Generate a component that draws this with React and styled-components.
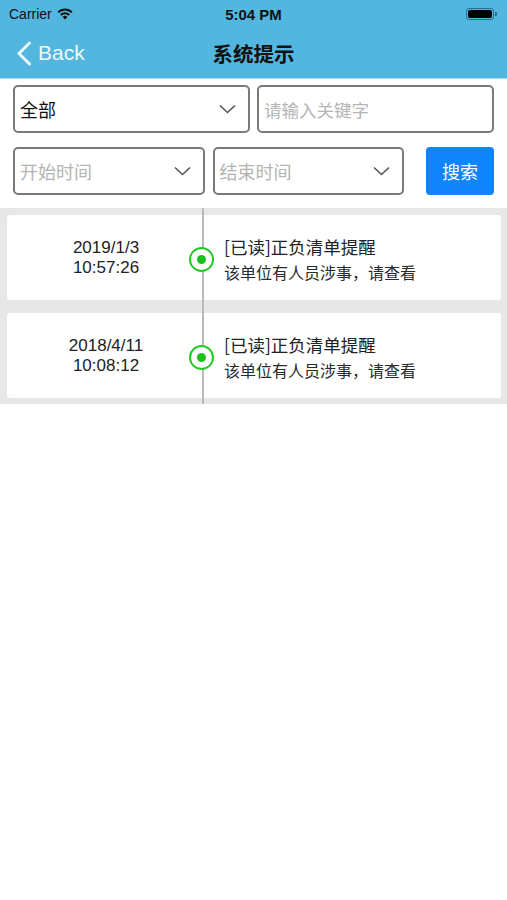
import React from "react";
import styled, { createGlobalStyle } from "styled-components";

const Global = createGlobalStyle`
  html, body { margin: 0; padding: 0; background: #ffffff; }
  body { font-family: "Liberation Sans", "Noto Sans CJK SC", sans-serif; }
  * { box-sizing: border-box; }
`;

const Page = styled.div`
  width: 507px;
  min-height: 900px;
  background: #ffffff;
`;

const Header = styled.header`
  background: #52b6df;
  border-bottom: 1px solid #a8dbef;
`;

const StatusBar = styled.div`
  height: 28px;
  display: grid;
  grid-template-columns: 1fr auto 1fr;
  align-items: center;
  padding: 0 9px;
  color: #111;
  font-size: 14px;
`;

const Carrier = styled.div`
  display: flex;
  align-items: center;
  gap: 5px;
`;

const Clock = styled.div`
  font-weight: bold;
  font-size: 15px;
`;

const BatteryWrap = styled.div`
  justify-self: end;
  display: flex;
  align-items: center;
  margin-right: 1px;
`;

const BatteryBody = styled.div`
  width: 28px;
  height: 12px;
  border-radius: 3px;
  border: 1px solid #2a6f8c;
  padding: 1px;
  & > div { width: 100%; height: 100%; background: #000; border-radius: 2px; }
`;

const BatteryNub = styled.div`
  width: 2px;
  height: 4px;
  margin-left: 1px;
  background: #2a6f8c;
  border-radius: 0 1px 1px 0;
`;

const NavBar = styled.div`
  height: 50px;
  display: grid;
  grid-template-columns: 1fr auto 1fr;
  align-items: center;
  padding: 0 16px;
`;

const BackButton = styled.div`
  display: flex;
  align-items: center;
  gap: 6px;
  color: #eef8fc;
  font-size: 21px;
`;

const Title = styled.div`
  font-family: "Noto Sans CJK SC", sans-serif;
  font-size: 20.5px;
  font-weight: bold;
  color: #111;
`;

const Filters = styled.div`
  padding: 6px 13px 13px;
  display: flex;
  flex-direction: column;
  gap: 14px;
`;

const Row = styled.div`
  display: flex;
  align-items: stretch;
  gap: ${(p) => p.$gap || 7}px;
  height: 48px;
`;

const Field = styled.div`
  flex: 1;
  display: flex;
  align-items: center;
  justify-content: space-between;
  border: 2px solid #7a7a7a;
  border-radius: 5px;
  padding: 0 12px 0 5px;
  font-family: "Noto Sans CJK SC", sans-serif;
  font-size: ${(p) => (p.$small ? 17.5 : 18)}px;
  color: ${(p) => (p.$placeholder ? "#b4b4b4" : "#111")};
  background: #fff;
`;

const SearchButton = styled.button`
  width: 68px;
  margin-left: 14px;
  border: none;
  border-radius: 4px;
  background: #0f84fb;
  color: #fff;
  font-family: "Noto Sans CJK SC", sans-serif;
  font-size: 18px;
`;

const List = styled.div`
  position: relative;
  background: #e7e7e7;
  padding: 7px 6px 6px 7px;
  display: flex;
  flex-direction: column;
  gap: 13px;
`;

const TimeLine = styled.div`
  position: absolute;
  z-index: 1;
  top: 0;
  bottom: 0;
  left: 202px;
  width: 1.5px;
  background: #b9b9b9;
`;

const Card = styled.div`
  height: 85px;
  background: #fff;
  border-radius: 3px;
  display: grid;
  grid-template-columns: 172px 25px 1fr;
  column-gap: 10px;
  align-items: center;
`;

const DateCol = styled.div`
  padding-left: 26px;
  text-align: center;
  font-size: 17px;
  line-height: 20px;
  color: #222;
`;

const Dot = styled.div`
  position: relative;
  z-index: 2;
  width: 25px;
  height: 25px;
  margin-top: 3px;
  border-radius: 50%;
  border: 2.5px solid #22c922;
  background: #fff;
  display: flex;
  align-items: center;
  justify-content: center;
  & > div {
    width: 9px;
    height: 9px;
    border-radius: 50%;
    background: #18c218;
  }
`;

const TextCol = styled.div`
  padding-top: 5px;
  font-family: "Noto Sans CJK SC", sans-serif;
  color: #222;
`;

const ItemTitle = styled.div`
  font-size: 17.5px;
  line-height: 24px;
`;

const ItemDesc = styled.div`
  font-size: 16px;
  line-height: 26px;
  color: #2a2a2a;
`;

const Chevron = () => (
  <svg width="17" height="10" viewBox="0 0 17 10" fill="none">
    <path d="M1 1.5 L8.5 8.5 L16 1.5" stroke="#555" strokeWidth="1.6" />
  </svg>
);

const Wifi = () => (
  <svg width="16" height="12" viewBox="0 0 16 12">
    <path d="M8 11.5 L5.6 8.9 A3.5 3.5 0 0 1 10.4 8.9 Z" fill="#111" />
    <path d="M3.8 7 A6 6 0 0 1 12.2 7" stroke="#111" strokeWidth="2" fill="none" />
    <path d="M1.2 4.3 A9.6 9.6 0 0 1 14.8 4.3" stroke="#111" strokeWidth="2" fill="none" />
  </svg>
);

const BackChevron = () => (
  <svg width="16" height="25" viewBox="0 0 16 25" fill="none">
    <path d="M13.5 2 L3 12.5 L13.5 23" stroke="#eef8fc" strokeWidth="3" strokeLinecap="round" strokeLinejoin="round" />
  </svg>
);

const items = [
  { date: "2019/1/3", time: "10:57:26" },
  { date: "2018/4/11", time: "10:08:12" },
];

export default function App() {
  return (
    <Page>
      <Global />
      <Header>
        <StatusBar>
          <Carrier>
            Carrier <Wifi />
          </Carrier>
          <Clock>5:04 PM</Clock>
          <BatteryWrap>
            <BatteryBody>
              <div />
            </BatteryBody>
            <BatteryNub />
          </BatteryWrap>
        </StatusBar>
        <NavBar>
          <BackButton>
            <BackChevron />
            Back
          </BackButton>
          <Title>系统提示</Title>
          <div />
        </NavBar>
      </Header>
      <Filters>
        <Row>
          <Field>
            全部
            <Chevron />
          </Field>
          <Field $placeholder $small>请输入关键字</Field>
        </Row>
        <Row $gap={8}>
          <Field $placeholder>
            开始时间
            <Chevron />
          </Field>
          <Field $placeholder>
            结束时间
            <Chevron />
          </Field>
          <SearchButton>搜索</SearchButton>
        </Row>
      </Filters>
      <List>
        <TimeLine />
        {items.map((it) => (
          <Card key={it.date}>
            <DateCol>
              {it.date}
              <br />
              {it.time}
            </DateCol>
            <Dot>
              <div />
            </Dot>
            <TextCol>
              <ItemTitle>[已读]正负清单提醒</ItemTitle>
              <ItemDesc>该单位有人员涉事，请查看</ItemDesc>
            </TextCol>
          </Card>
        ))}
      </List>
    </Page>
  );
}
